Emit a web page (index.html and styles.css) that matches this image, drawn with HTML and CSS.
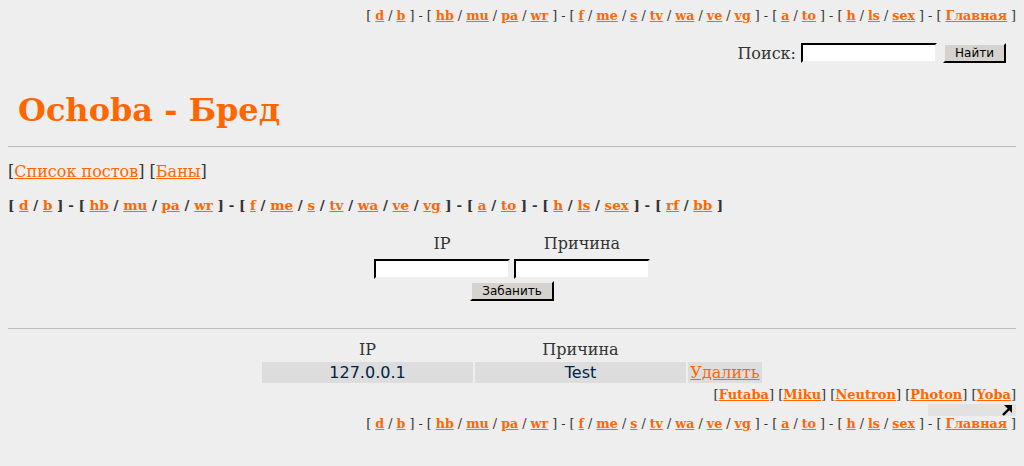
FILE: index.html
```html
<!DOCTYPE html>
<html>
<head>
<meta charset="utf-8">
<link rel="stylesheet" href="styles.css">
</head>
<body>
<div class="adminbar">
  <div class="navlinks">[ <a href="#">d</a> / <a href="#">b</a> ] - [ <a href="#">hb</a> / <a href="#">mu</a> / <a href="#">pa</a> / <a href="#">wr</a> ] - [ <a href="#">f</a> / <a href="#">me</a> / <a href="#">s</a> / <a href="#">tv</a> / <a href="#">wa</a> / <a href="#">ve</a> / <a href="#">vg</a> ] - [ <a href="#">a</a> / <a href="#">to</a> ] - [ <a href="#">h</a> / <a href="#">ls</a> / <a href="#">sex</a> ] - [ <a href="#">Главная</a> ]</div>
  <form class="search">
    <label>Поиск:</label>
    <input type="text" class="field search-field">
    <button type="button" class="btn">Найти</button>
  </form>
</div>
<h1 class="logo">Ochoba - Бред</h1>
<hr class="rule">
<div class="adminlinks">[<a href="#">Список постов</a>] [<a href="#">Баны</a>]</div>
<div class="boardnav">[ <a href="#">d</a> / <a href="#">b</a> ] - [ <a href="#">hb</a> / <a href="#">mu</a> / <a href="#">pa</a> / <a href="#">wr</a> ] - [ <a href="#">f</a> / <a href="#">me</a> / <a href="#">s</a> / <a href="#">tv</a> / <a href="#">wa</a> / <a href="#">ve</a> / <a href="#">vg</a> ] - [ <a href="#">a</a> / <a href="#">to</a> ] - [ <a href="#">h</a> / <a href="#">ls</a> / <a href="#">sex</a> ] - [ <a href="#">rf</a> / <a href="#">bb</a> ]</div>
<form class="banform">
  <div class="bangrid">
    <div class="head">IP</div>
    <div class="head">Причина</div>
    <input type="text" class="field ban-field">
    <input type="text" class="field ban-field">
  </div>
  <button type="button" class="btn ban-btn">Забанить</button>
</form>
<hr class="rule rule2">
<div class="banlist">
  <div class="listgrid">
    <div class="lhead">IP</div>
    <div class="lhead">Причина</div>
    <div></div>
    <div class="cell">127.0.0.1</div>
    <div class="cell">Test</div>
    <div class="cell act"><a href="#">Удалить</a></div>
  </div>
</div>
<div class="styles">[<a href="#">Futaba</a>] [<a href="#">Miku</a>] [<a href="#">Neutron</a>] [<a href="#">Photon</a>] [<a href="#">Yoba</a>]</div>
<div class="uprow"><div class="upbox"><svg width="12" height="12" viewBox="0 0 12 12"><path d="M2 11 L9 4" stroke="#000" stroke-width="2.4" fill="none"/><path d="M3 1 H11 V9 Z" fill="#000"/></svg></div></div>
<div class="navlinks bottom">[ <a href="#">d</a> / <a href="#">b</a> ] - [ <a href="#">hb</a> / <a href="#">mu</a> / <a href="#">pa</a> / <a href="#">wr</a> ] - [ <a href="#">f</a> / <a href="#">me</a> / <a href="#">s</a> / <a href="#">tv</a> / <a href="#">wa</a> / <a href="#">ve</a> / <a href="#">vg</a> ] - [ <a href="#">a</a> / <a href="#">to</a> ] - [ <a href="#">h</a> / <a href="#">ls</a> / <a href="#">sex</a> ] - [ <a href="#">Главная</a> ]</div>
</body>
</html>
```
FILE: styles.css
```css
html { background: #eeeeee; }
body {
  margin: 8px;
  background: #eeeeee;
  color: #333333;
  font-family: "DejaVu Serif", serif;
  font-size: 15px;
}
a { color: #ff6600; }
.navlinks {
  text-align: right;
  font-size: 12.7px;
  line-height: 16px;
  font-family: "DejaVu Serif", serif;
  color: #333;
}
.navlinks a { font-weight: bold; }
.adminbar { display: flex; flex-direction: column; }
.search {
  display: flex;
  justify-content: flex-end;
  align-items: center;
  margin: 19px 10px 0 0;
  gap: 5px;
}
.search label { font-size: 16px; color: #333; }
.field {
  box-sizing: border-box;
  height: 20px;
  border: 2px inset #eee;
  border-top-color: #222;
  border-left-color: #222;
  background: #fff;
  margin: 0;
  padding: 0 2px;
}
.search-field { width: 136px; }
.btn {
  box-sizing: border-box;
  font-family: "DejaVu Sans", sans-serif;
  font-size: 12px;
  color: #000;
  background: #d6d3ce;
  border: 2px outset #eee;
  border-right-color: #222;
  border-bottom-color: #222;
  height: 20px;
  padding: 0 8px;
  margin: 0;
}
.search .btn { width: 63px; margin-left: 1px; }
.logo {
  margin: 27px 0 0 10px;
  color: #ff6600;
  font-family: "DejaVu Serif", serif;
  font-size: 32px;
  font-weight: bold;
  line-height: 40px;
}
.rule {
  border: 0;
  border-top: 1px solid #bbbbbb;
  margin: 16px 0 0 0;
  height: 0;
}
.adminlinks {
  margin-top: 15px;
  font-size: 16px;
  line-height: 20px;
}
.boardnav {
  margin-top: 15px;
  font-size: 13.5px;
  font-weight: bold;
  line-height: 16px;
}
.banform {
  display: flex;
  flex-direction: column;
  align-items: center;
  margin-top: 16px;
}
.bangrid {
  display: grid;
  grid-template-columns: 136px 136px;
  column-gap: 4px;
}
.head {
  text-align: center;
  font-size: 16px;
  line-height: 30px;
}
.ban-field { width: 136px; }
.ban-btn { width: 84px; margin-top: 2px; }
.rule2 { margin-top: 27px; }
.banlist { display: flex; justify-content: center; margin-top: 11px; }
.listgrid {
  display: grid;
  grid-template-columns: 211px 211px 74px;
  gap: 2px;
}
.lhead {
  text-align: center;
  font-size: 16px;
  line-height: 20px;
}
.cell {
  background: #dddddd;
  text-align: center;
  font-family: "DejaVu Sans", sans-serif;
  font-size: 16px;
  line-height: 21px;
  color: #002244;
}
.cell.act { font-family: "DejaVu Serif", serif; }
.styles {
  text-align: right;
  font-size: 13px;
  line-height: 16px;
  margin-top: 4px;
}
.styles a { font-weight: bold; }
.uprow { display: flex; justify-content: flex-end; margin-top: 1px; }
.upbox {
  width: 88px;
  height: 12px;
  background: #e2e2e2;
  display: flex;
  justify-content: flex-end;
  align-items: flex-end;
}
.upbox svg { display: block; margin-right: 3px; }
.bottom { margin-top: 0; }
```
